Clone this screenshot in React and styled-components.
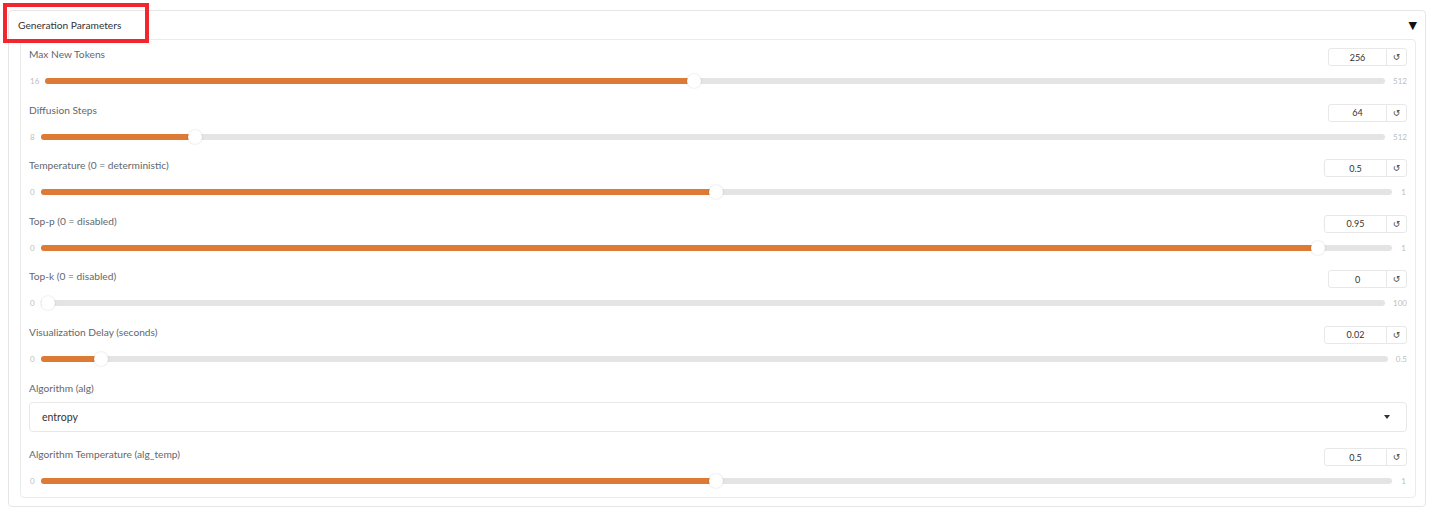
import React from 'react'
import styled, { createGlobalStyle } from 'styled-components'

const GlobalStyle = createGlobalStyle`
  html, body {
    margin: 0;
    padding: 0;
    background: #fff;
    font-family: "Lato", "Noto Sans", sans-serif;
  }
`

const Page = styled.div`
  width: 1442px;
  height: 526px;
  padding: 10px 16px 0 8px;
  box-sizing: border-box;
  position: relative;
`

const Panel = styled.div`
  border: 1px solid #e6e6e6;
  border-radius: 4px;
  padding: 0 9px 8px 11px;
`

const Header = styled.div`
  height: 28px;
  display: flex;
  align-items: center;
  justify-content: space-between;
  font-size: 10.2px;
  color: #333;
`

const HeaderTitle = styled.span`
  margin-left: -2px;
`

const Arrow = styled.span`
  font-family: "DejaVu Sans", sans-serif;
  font-size: 11px;
  color: #111;
  margin-right: -1px;
`

const Inner = styled.div`
  border: 1px solid #ebebeb;
  border-radius: 4px;
  padding: 8px 8px 9px 8px;
  display: flex;
  flex-direction: column;
`

const Param = styled.div`
  display: flex;
  flex-direction: column;
  margin-bottom: ${p => p.$gap || 15.6}px;
  &:last-child {
    margin-bottom: 0;
  }
`

const TopRow = styled.div`
  height: 18px;
  display: flex;
  justify-content: space-between;
  align-items: flex-start;
`

const Label = styled.span`
  font-size: 10.2px;
  line-height: 12px;
  color: #63676e;
`

const Counter = styled.div`
  display: flex;
  height: 18px;
  border: 1px solid #e8e8e8;
  border-radius: 3px;
  box-sizing: border-box;
`

const NumberBox = styled.div`
  width: ${p => p.$w}px;
  display: flex;
  align-items: center;
  justify-content: center;
  font-size: 9px;
  color: #333;
  border-right: 1px solid #e8e8e8;
`

const Reset = styled.div`
  width: 19px;
  display: flex;
  align-items: center;
  justify-content: center;
  font-family: "DejaVu Sans", sans-serif;
  font-size: 9px;
  color: #444;
`

const SliderRow = styled.div`
  height: 14px;
  margin-top: 8px;
  display: flex;
  align-items: center;
  gap: 6px;
`

const Bound = styled.span`
  font-size: 8px;
  color: #bdbdbd;
  line-height: 10px;
  padding-left: 1px;
`

const MaxBound = styled(Bound)`
  margin-left: 2px;
  min-width: 7px;
  text-align: center;
  padding-left: 0;
`

const Track = styled.div`
  flex: 1;
  height: 6px;
  background: #e4e4e4;
  border-radius: 3px;
  position: relative;
`

const Fill = styled.div`
  position: absolute;
  left: 0;
  top: 0;
  bottom: 0;
  background: #dd7a35;
  border-radius: 3px;
`

const Thumb = styled.div`
  position: absolute;
  top: -4px;
  width: 14px;
  height: 14px;
  border-radius: 50%;
  background: #fff;
  box-shadow: 0 0 2px rgba(0, 0, 0, 0.18);
`

const Select = styled.div`
  margin-top: 8px;
  height: 30px;
  border: 1px solid #e8e8e8;
  border-radius: 4px;
  box-sizing: border-box;
  display: flex;
  align-items: center;
  justify-content: space-between;
  padding: 0 16px 0 12px;
  font-size: 10.5px;
  color: #333;
`

const Caret = styled.span`
  width: 0;
  height: 0;
  border-left: 3.5px solid transparent;
  border-right: 3.5px solid transparent;
  border-top: 4px solid #333;
`

const Annotation = styled.div`
  position: absolute;
  left: 3px;
  top: 3px;
  width: 146px;
  height: 40px;
  border: 4px solid #f2262f;
  box-sizing: border-box;
  pointer-events: none;
`

const params = [
  { label: 'Max New Tokens', value: '256', min: 16, max: 512, v: 256, w: 57 },
  { label: 'Diffusion Steps', value: '64', min: 8, max: 512, v: 64, w: 57 },
  { label: 'Temperature (0 = deterministic)', value: '0.5', min: 0, max: 1, v: 0.5, w: 61 },
  { label: 'Top-p (0 = disabled)', value: '0.95', min: 0, max: 1, v: 0.95, w: 61 },
  { label: 'Top-k (0 = disabled)', value: '0', min: 0, max: 100, v: 0, w: 57 },
  { label: 'Visualization Delay (seconds)', value: '0.02', min: 0, max: 0.5, v: 0.02, w: 61 },
]

function Slider({ min, max, v }) {
  const pct = (v - min) / (max - min)
  return (
    <SliderRow>
      <Bound>{min}</Bound>
      <Track>
        <Fill style={{ width: `calc(7px + ${pct} * (100% - 14px))` }} />
        <Thumb style={{ left: `calc(${pct} * (100% - 14px))` }} />
      </Track>
      <MaxBound>{max}</MaxBound>
    </SliderRow>
  )
}

function SliderParam({ p }) {
  return (
    <Param>
      <TopRow>
        <Label>{p.label}</Label>
        <Counter>
          <NumberBox $w={p.w}>{p.value}</NumberBox>
          <Reset>↺</Reset>
        </Counter>
      </TopRow>
      <Slider min={p.min} max={p.max} v={p.v} />
    </Param>
  )
}

export default function App() {
  return (
    <Page>
      <GlobalStyle />
      <Panel>
        <Header>
          <HeaderTitle>Generation Parameters</HeaderTitle>
          <Arrow>▼</Arrow>
        </Header>
        <Inner>
          {params.map(p => <SliderParam key={p.label} p={p} />)}
          <Param $gap={16.5}>
            <Label>Algorithm (alg)</Label>
            <Select>
              <span>entropy</span>
              <Caret />
            </Select>
          </Param>
          <SliderParam p={{ label: 'Algorithm Temperature (alg_temp)', value: '0.5', min: 0, max: 1, v: 0.5, w: 61 }} />
        </Inner>
      </Panel>
      <Annotation />
    </Page>
  )
}
